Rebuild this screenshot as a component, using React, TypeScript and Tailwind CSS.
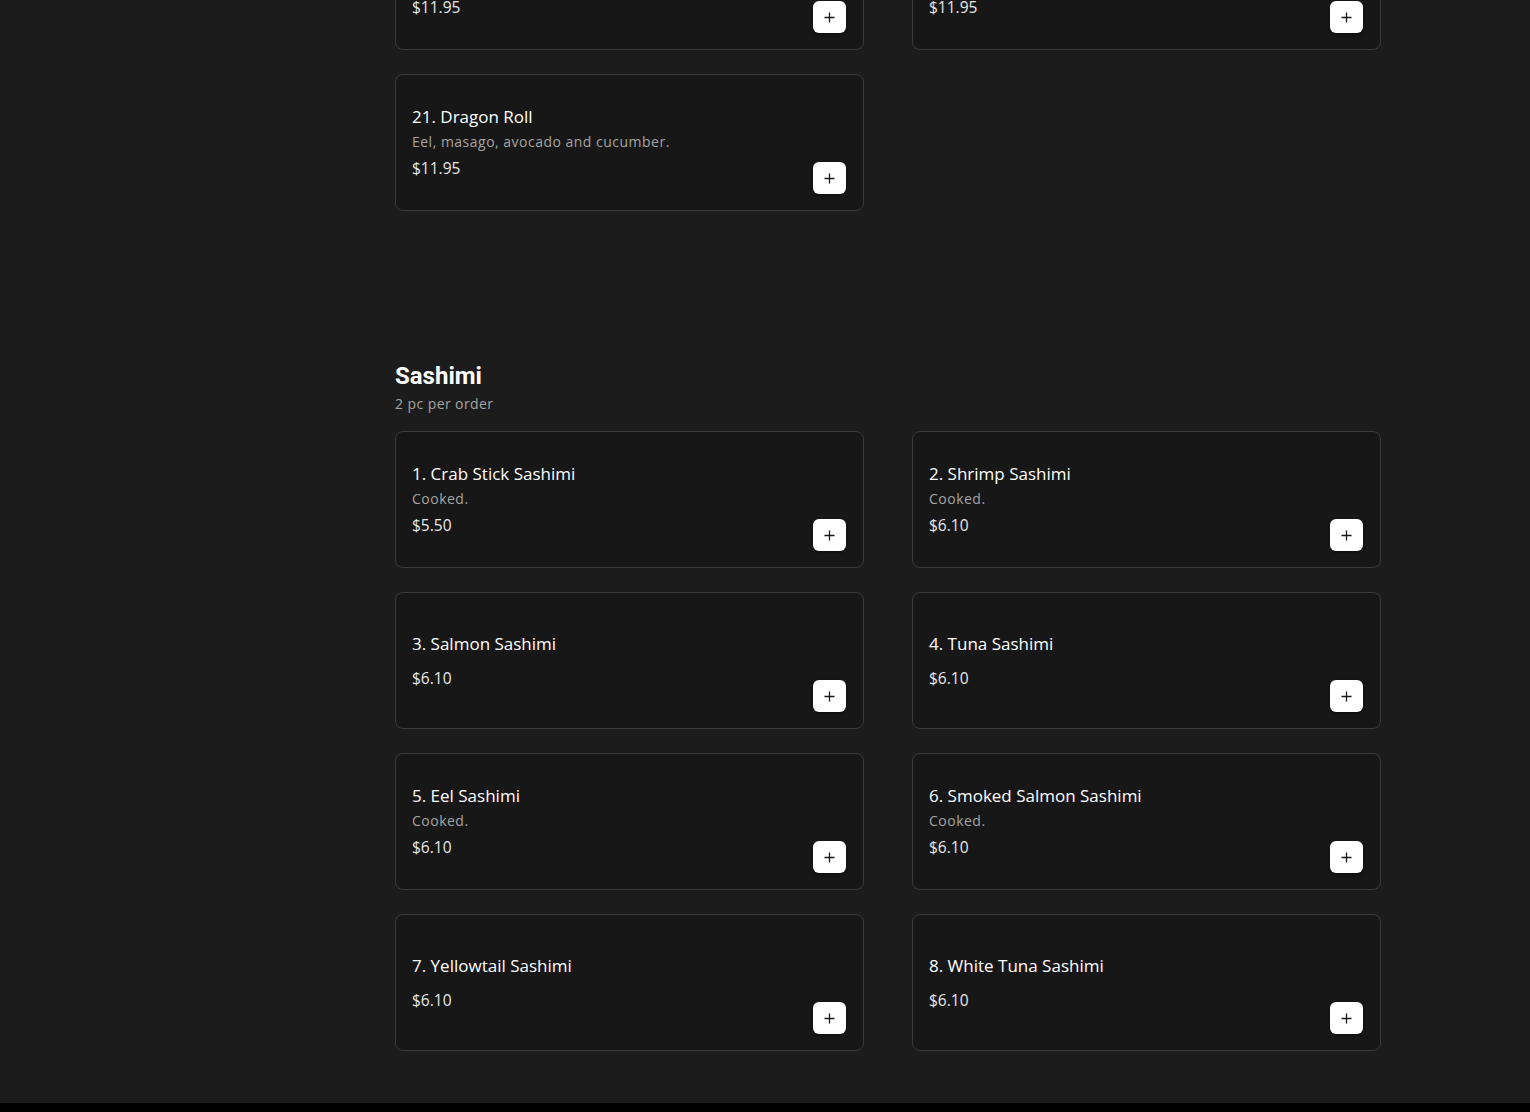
import React from 'react';

type Item = { name: string; desc?: string; price: string };

const prevRow: Item[] = [
  { name: '19. Rainbow Roll', desc: 'Crab, avocado and cucumber.', price: '$11.95' },
  { name: '20. Caterpillar Roll', desc: 'Eel, cucumber and avocado.', price: '$11.95' },
  { name: '21. Dragon Roll', desc: 'Eel, masago, avocado and cucumber.', price: '$11.95' },
];

const sashimi: Item[] = [
  { name: '1. Crab Stick Sashimi', desc: 'Cooked.', price: '$5.50' },
  { name: '2. Shrimp Sashimi', desc: 'Cooked.', price: '$6.10' },
  { name: '3. Salmon Sashimi', price: '$6.10' },
  { name: '4. Tuna Sashimi', price: '$6.10' },
  { name: '5. Eel Sashimi', desc: 'Cooked.', price: '$6.10' },
  { name: '6. Smoked Salmon Sashimi', desc: 'Cooked.', price: '$6.10' },
  { name: '7. Yellowtail Sashimi', price: '$6.10' },
  { name: '8. White Tuna Sashimi', price: '$6.10' },
];

function PlusIcon() {
  return (
    <svg width="11" height="11" viewBox="0 0 11 11" fill="none">
      <path d="M5.5 0.5v10M0.5 5.5h10" stroke="#1a1a1a" strokeWidth="1.3" />
    </svg>
  );
}

function MenuCard({ item }: { item: Item }) {
  return (
    <div className="h-[137px] rounded-lg border border-[#3a3a3a] bg-[#171717] pl-4 pr-[17px] pb-4 flex">
      <div className="flex-1 flex flex-col justify-center pt-4">
        <div className="text-[17px] leading-6 font-medium text-white">{item.name}</div>
        {item.desc && (
          <div className="mt-[3px] text-[14px] leading-5 tracking-[0.035em] text-[#a4a4a4]">{item.desc}</div>
        )}
        <div className={(item.desc ? 'mt-1' : 'mt-[10px]') + ' text-[15.5px] leading-6 text-[#e8e8e8]'}>
          {item.price}
        </div>
      </div>
      <button className="self-end w-[33px] h-[32px] rounded-md bg-white flex items-center justify-center shadow-[0_1px_3px_rgba(0,0,0,0.5)]">
        <PlusIcon />
      </button>
    </div>
  );
}

export default function App() {
  return (
    <div
      className="min-h-screen bg-[#1c1c1c] flex flex-col"
      style={{ fontFamily: '"Open Sans", "Noto Sans", sans-serif' }}
    >
      <div className="flex-1 overflow-hidden">
        <div className="flex -mt-[87px]">
          <aside className="w-[395px] shrink-0" />
          <main className="w-[986px] shrink-0">
            {/* previous section tail */}
            <div className="grid grid-cols-2 gap-x-12 gap-y-6">
              {prevRow.map((it) => (
                <MenuCard key={it.name} item={it} />
              ))}
            </div>

            {/* Sashimi */}
            <section className="mt-[151px]">
              <h2
                className="text-[24px] leading-7 font-bold text-white"
                style={{ fontFamily: 'Roboto, sans-serif' }}
              >
                Sashimi
              </h2>
              <p className="mt-[4px] text-[14px] leading-5 tracking-[0.03em] text-[#a4a4a4]">2 pc per order</p>
              <div className="mt-[17px] grid grid-cols-2 gap-x-12 gap-y-6">
                {sashimi.map((it) => (
                  <MenuCard key={it.name} item={it} />
                ))}
              </div>
            </section>
            <div className="h-[52px]" />
          </main>
        </div>
      </div>
      <footer className="h-[200px] bg-black" />
    </div>
  );
}
